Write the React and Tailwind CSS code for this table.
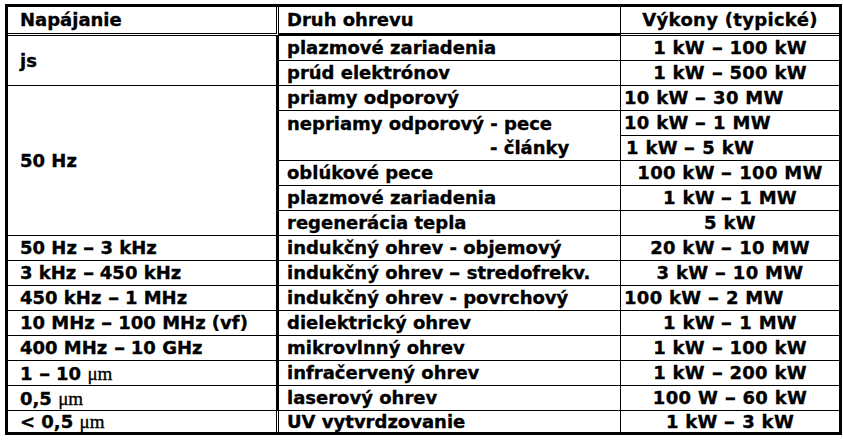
import React from "react";

const F = { fontFamily: '"DejaVu Sans", Verdana, sans-serif' };

function Mu({ children }) {
  return (
    <span className="font-normal text-[19px]" style={{ fontFamily: '"Liberation Serif", serif' }}>
      {children}
    </span>
  );
}

function D() {
  return <span className="inline-block px-[1px] scale-x-125">–</span>;
}

const c1 = "p-0 pl-[12px] align-middle border-r-[3px] border-double border-black whitespace-nowrap";
const c2 = "p-0 pl-[8px] align-middle border-r border-solid border-black whitespace-nowrap";
const c3 = "p-0 align-middle text-center whitespace-nowrap tracking-[0.3px]";
const b = " border-b border-solid border-black";

export default function App() {
  return (
    <div className="bg-white w-[843px] h-[445px] pl-[5px] pt-[4px]">
      <table
        className="border-separate border-spacing-0 border-[3px] border-solid border-black w-[837px] table-fixed text-black font-bold text-[18px] leading-none [-webkit-text-stroke:0.35px_black]"
        style={F}
      >
        <colgroup>
          <col className="w-[271px]" />
          <col className="w-[342px]" />
          <col className="w-[218px]" />
        </colgroup>
        <tbody>
          <tr className="h-[29px]">
            <td className={c1 + " border-b-[3px]"}>Napájanie</td>
            <td className={c2 + " border-b-[3px] border-double"}>Druh ohrevu</td>
            <td className={c3 + " border-b-[3px] border-double border-black"}>Výkony (typické)</td>
          </tr>
          <tr className="h-[25px]">
            <td rowSpan={2} className={c1 + b}>js</td>
            <td className={c2 + b}>plazmové zariadenia</td>
            <td className={c3 + b}>1 kW <D /> 100 kW</td>
          </tr>
          <tr className="h-[25px]">
            <td className={c2 + b}>prúd elektrónov</td>
            <td className={c3 + b}>1 kW <D /> 500 kW</td>
          </tr>
          <tr className="h-[25px]">
            <td rowSpan={6} className={c1 + b}>50 Hz</td>
            <td className={c2 + b}>priamy odporový</td>
            <td className={c3 + b + " text-left pl-[3px]"}>10 kW <D /> 30 MW</td>
          </tr>
          <tr className="h-[25px]">
            <td rowSpan={2} className={c2 + b}>
              <div className="h-[25px] flex items-center">nepriamy odporový - pece</div>
              <div className="h-[24px] flex items-center pl-[203px]">- články</div>
            </td>
            <td className={c3 + b + " text-left pl-[3px]"}>10 kW <D /> 1 MW</td>
          </tr>
          <tr className="h-[25px]">
            <td className={c3 + b + " text-left pl-[5px]"}>1 kW <D /> 5 kW</td>
          </tr>
          <tr className="h-[25px]">
            <td className={c2 + b}>oblúkové pece</td>
            <td className={c3 + b}>100 kW <D /> 100 MW</td>
          </tr>
          <tr className="h-[25px]">
            <td className={c2 + b}>plazmové zariadenia</td>
            <td className={c3 + b}>1 kW <D /> 1 MW</td>
          </tr>
          <tr className="h-[25px]">
            <td className={c2 + b}>regenerácia tepla</td>
            <td className={c3 + b}>5 kW</td>
          </tr>
          <tr className="h-[25px]">
            <td className={c1 + b}>50 Hz <D /> 3 kHz</td>
            <td className={c2 + b}>indukčný ohrev - objemový</td>
            <td className={c3 + b}>20 kW <D /> 10 MW</td>
          </tr>
          <tr className="h-[25px]">
            <td className={c1 + b}>3 kHz <D /> 450 kHz</td>
            <td className={c2 + b}>indukčný ohrev <D /> stredofrekv.</td>
            <td className={c3 + b}>3 kW <D /> 10 MW</td>
          </tr>
          <tr className="h-[25px]">
            <td className={c1 + b}>450 kHz <D /> 1 MHz</td>
            <td className={c2 + b}>indukčný ohrev - povrchový</td>
            <td className={c3 + b + " text-left pl-[3px]"}>100 kW <D /> 2 MW</td>
          </tr>
          <tr className="h-[25px]">
            <td className={c1 + b}>10 MHz <D /> 100 MHz (vf)</td>
            <td className={c2 + b}>dielektrický ohrev</td>
            <td className={c3 + b}>1 kW <D /> 1 MW</td>
          </tr>
          <tr className="h-[25px]">
            <td className={c1 + b}>400 MHz <D /> 10 GHz</td>
            <td className={c2 + b}>mikrovlnný ohrev</td>
            <td className={c3 + b}>1 kW <D /> 100 kW</td>
          </tr>
          <tr className="h-[25px]">
            <td className={c1 + b}>1 <D /> 10 <Mu>μm</Mu></td>
            <td className={c2 + b}>infračervený ohrev</td>
            <td className={c3 + b}>1 kW <D /> 200 kW</td>
          </tr>
          <tr className="h-[25px]">
            <td className={c1 + b}>0,5 <Mu>μm</Mu></td>
            <td className={c2 + b}>laserový ohrev</td>
            <td className={c3 + b}>100 W <D /> 60 kW</td>
          </tr>
          <tr className="h-[21px]">
            <td className={c1}>&lt; 0,5 <Mu>μm</Mu></td>
            <td className={c2}>UV vytvrdzovanie</td>
            <td className={c3}>1 kW <D /> 3 kW</td>
          </tr>
        </tbody>
      </table>
    </div>
  );
}
